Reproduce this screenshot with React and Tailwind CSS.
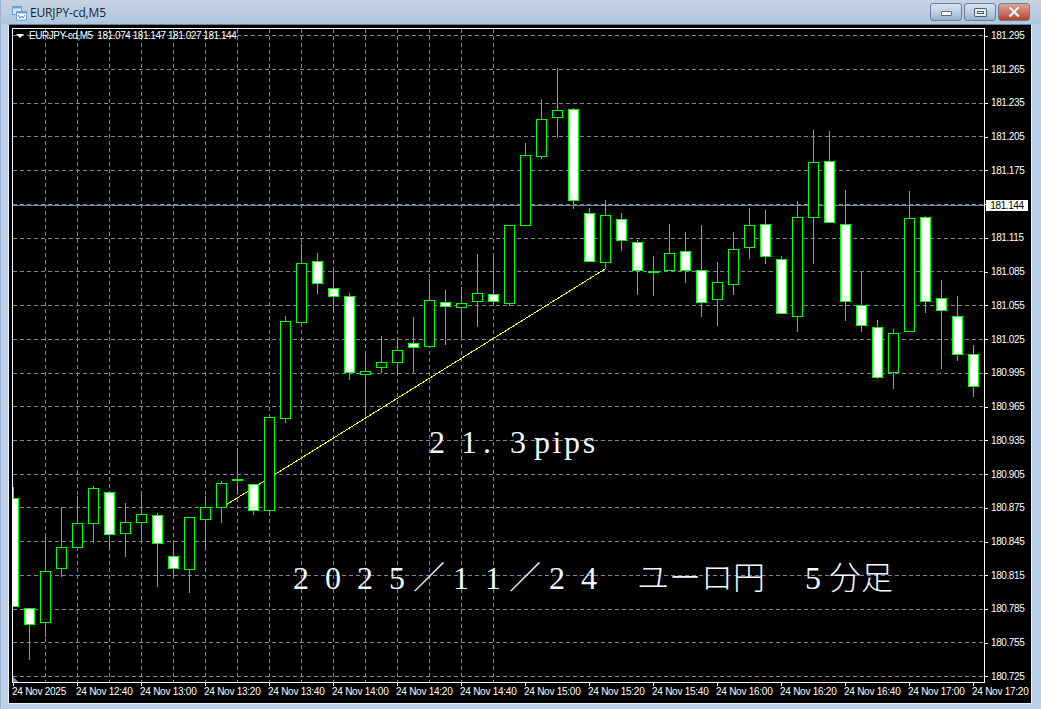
import React from "react";

// [filled, bodyTop, bodyBottom, high, low]
const candles = [
  [1, 498, 607, 487, 607], [1, 608, 625, 608, 660], [0, 571, 623, 536, 637], [0, 547, 569, 507, 577],
  [0, 523, 548, 496, 548], [0, 488, 524, 486, 543], [1, 492, 535, 492, 549], [0, 522, 534, 503, 557],
  [0, 514, 523, 491, 541], [1, 515, 544, 513, 587], [1, 556, 569, 544, 577], [0, 517, 570, 517, 593],
  [0, 507, 520, 496, 549], [0, 483, 508, 481, 523], [1, 479, 481, 448, 495], [1, 484, 511, 484, 515],
  [0, 417, 511, 417, 512], [0, 321, 419, 316, 423], [0, 263, 323, 244, 323], [1, 261, 284, 253, 294],
  [1, 288, 297, 267, 313], [1, 296, 373, 293, 380], [0, 371, 375, 352, 416], [0, 362, 368, 336, 373],
  [0, 350, 363, 341, 372], [1, 343, 348, 317, 373], [0, 300, 347, 279, 348], [1, 302, 307, 290, 345],
  [0, 303, 308, 287, 337], [0, 293, 302, 254, 327], [1, 294, 302, 256, 306], [0, 225, 304, 225, 306],
  [0, 155, 226, 143, 226], [0, 119, 157, 99, 159], [0, 110, 118, 68, 138], [1, 109, 201, 108, 209],
  [1, 213, 262, 208, 262], [0, 215, 263, 200, 269], [1, 219, 241, 213, 251], [1, 242, 271, 240, 295],
  [1, 271, 273, 256, 296], [0, 253, 271, 224, 271], [1, 251, 271, 232, 283], [1, 270, 303, 225, 317],
  [0, 282, 300, 262, 326], [0, 249, 285, 232, 295], [0, 225, 248, 208, 259], [1, 224, 257, 210, 264],
  [1, 259, 314, 256, 314], [0, 217, 317, 201, 332], [0, 162, 218, 130, 264], [1, 161, 223, 131, 223],
  [1, 224, 302, 190, 321], [1, 305, 326, 272, 332], [1, 327, 378, 320, 379], [0, 333, 373, 329, 389],
  [0, 218, 332, 191, 332], [1, 217, 302, 216, 313], [1, 298, 311, 280, 369], [1, 316, 355, 296, 361],
  [1, 354, 387, 345, 397],
];

// the 181.145 row is covered by the bid label, so it only keeps its tick
const prices = [
  "181.295", "181.265", "181.235", "181.205", "181.175", "", "181.115", "181.085", "181.055", "181.025",
  "180.995", "180.965", "180.935", "180.905", "180.875", "180.845", "180.815", "180.785", "180.755", "180.725",
];

const times = [
  "24 Nov 2025", "24 Nov 12:40", "24 Nov 13:00", "24 Nov 13:20", "24 Nov 13:40", "24 Nov 14:00", "24 Nov 14:20",
  "24 Nov 14:40", "24 Nov 15:00", "24 Nov 15:20", "24 Nov 15:40", "24 Nov 16:00", "24 Nov 16:20", "24 Nov 16:40",
  "24 Nov 17:00", "24 Nov 17:20",
];

const gridYs = prices.map((_, k) => Math.floor(35.6 + 33.74 * k) + 0.5);
const gridXs = Array.from({ length: 15 }, (_, k) => 45.5 + 32 * k);

const TitleIcon = () => (
  <svg width="16" height="16" viewBox="0 0 16 16" className="shrink-0">
    <rect x="1.5" y="1.5" width="9" height="8" fill="#dbe9f8" stroke="#6f9fd4" />
    <rect x="1.5" y="1.5" width="9" height="2" fill="#6f9fd4" />
    <rect x="5.5" y="6.5" width="10" height="8.5" fill="#fff" stroke="#6f9fd4" />
    <rect x="5.5" y="6.5" width="10" height="2" fill="#6f9fd4" />
    <path d="M7 10l2 3 1.5-2 1.5 2 2-3" fill="none" stroke="#3f7fc5" />
  </svg>
);

const WinButton = ({ children, close }) => (
  <div
    className={
      "relative flex h-[18px] w-[32px] items-center justify-center rounded-[3px] border border-[#6b8096] " +
      (close
        ? "bg-gradient-to-b from-[#dfa49a] via-[#cf7465] to-[#b5402c]"
        : "bg-gradient-to-b from-[#d6e3ef] via-[#bdd0e3] to-[#97b1ca]")
    }
  >
    {children}
  </div>
);

const Chart = () => (
  <svg width="971" height="653" viewBox="13 29 971 653" className="block" shapeRendering="crispEdges">
    {gridYs.map((y) => (
      <line key={y} x1="13" x2="984" y1={y} y2={y} stroke="#778899" strokeDasharray="4 3" />
    ))}
    {gridXs.map((x) => (
      <line key={x} x1={x} x2={x} y1="29" y2="682" stroke="#778899" strokeDasharray="4 3" />
    ))}
    <line x1="13" x2="984" y1="205.5" y2="205.5" stroke="#778899" />
    <line x1="221" y1="508" x2="605" y2="269" stroke="#ffff00" />
    <polygon points="13,677 18,682 13,682" fill="#778899" />
    {candles.map(([filled, top, bottom, hi, lo], i) => {
      const x = 13 + 16 * i;
      return (
        <g key={i}>
          <line x1={x + 0.5} x2={x + 0.5} y1={hi} y2={lo} stroke="#00ff00" />
          <rect
            x={x - 4.5}
            y={top + 0.5}
            width="10"
            height={bottom - top - 1}
            fill={filled ? "#ffffff" : "#000000"}
            stroke="#00ff00"
          />
        </g>
      );
    })}
  </svg>
);

const Cells = ({ text, className }) => (
  <div className={"absolute flex h-8 items-baseline text-[32px] leading-8 font-light text-[#f4f8fc] " + className}>
    {text.map((c, i) => (
      <span key={i} className="inline-block w-8 text-center">
        {c}
      </span>
    ))}
  </div>
);

export default function App() {
  return (
    <div className="flex h-[709px] w-[1041px] flex-col overflow-hidden border-l border-[#9db4cb] bg-[#b9d1ea] font-['Liberation_Sans',sans-serif]">
      <div className="flex h-[24px] shrink-0 items-start bg-gradient-to-b from-[#c6d3e0] to-[#aec8e3] pr-[11px]">
        <div className="mt-[5px] ml-[10px]">
          <TitleIcon />
        </div>
        <span className="mt-[4px] ml-[3px] font-['Open_Sans',sans-serif] text-[12px] leading-[18px] tracking-[-0.15px] text-[#1c2630]">EURJPY-cd,M5</span>
        <div className="mt-[3px] ml-auto flex gap-[2px]">
          <WinButton>
            <div className="mt-[3px] h-[5px] w-[11px] rounded-[1px] border border-[#5a6b7c] bg-white" />
          </WinButton>
          <WinButton>
            <div className="flex h-[9px] w-[13px] items-center justify-center rounded-[1px] border border-[#4f6073] bg-[#e8eef4]">
              <div className="h-[3px] w-[7px] border border-[#4f6073]" />
            </div>
          </WinButton>
          <WinButton close>
            <span className="text-[17px] leading-none font-bold text-[#f2f0ee] [text-shadow:0_0_1px_#5c3a33]">✕</span>
          </WinButton>
        </div>
      </div>

      <div className="flex-1 pr-[9px] pb-[5px] pl-[7px]">
        <div className="flex h-full flex-col overflow-hidden border border-t-[#6f8296] border-r-[#eef3f8] border-b-[#eef3f8] border-l-[#eef3f8] bg-black pt-[3px] pl-[3px]">
          <div className="flex h-[655px] shrink-0">
            <div className="relative h-[655px] w-[973px] shrink-0 border border-white">
              <Chart />
              <div className="absolute top-[1px] left-[3px] flex h-3 items-center gap-[5px] text-[10px] leading-3 tracking-[-0.45px] whitespace-nowrap text-white">
                <div className="h-0 w-0 border-x-[4px] border-t-[4px] border-x-transparent border-t-white" />
                <span>EURJPY-cd,M5&nbsp; 181.074 181.147 181.027 181.144</span>
              </div>
              <div className="font-['Liberation_Serif','Noto_Sans_CJK_JP',serif]">
                <Cells text={["2", "1"]} className="top-[397px] left-[408px]" />
                <span className="absolute top-[397px] left-[470px] text-[32px] leading-8 font-light text-[#f4f8fc]">.</span>
                <Cells text={["3"]} className="top-[397px] left-[489px]" />
                <span className="absolute top-[397px] left-[521px] text-[32px] leading-8 font-light tracking-[2.6px] text-[#f4f8fc]">pips</span>
                <Cells
                  text={["2", "0", "2", "5", "／", "1", "1", "／", "2", "4", "\u3000", "ユ", "ー", "ロ", "円", "\u3000", "5", "分", "足"]}
                  className="top-[533px] left-[272px]"
                />
              </div>
            </div>
            <div className="relative flex flex-1 flex-col justify-between pt-[2px] text-[10px] leading-3 tracking-[-0.4px] text-white">
              {prices.map((p, k) => (
                <div key={k} className="flex h-3 items-center">
                  <div className="h-px w-[3px] bg-white" />
                  <span className="ml-[3px]">{p}</span>
                </div>
              ))}
              <div className="absolute top-[172px] left-px flex h-[11px] w-[42px] items-center justify-center bg-white text-black">181.144</div>
            </div>
          </div>
          <div className="flex flex-1 pl-px text-[10px] leading-3 tracking-[-0.25px] text-white">
            {times.map((t) => (
              <div key={t} className="w-16 shrink-0">
                <div className="h-[3px] w-px bg-white" />
                <div className="-ml-px whitespace-nowrap">{t}</div>
              </div>
            ))}
          </div>
        </div>
      </div>
    </div>
  );
}
